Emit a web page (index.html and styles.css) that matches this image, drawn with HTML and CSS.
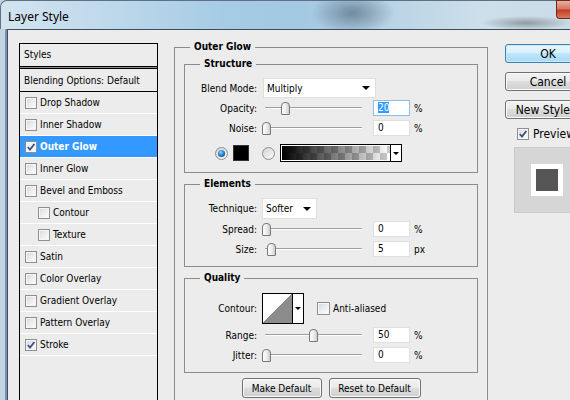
FILE: index.html
```html
<!DOCTYPE html>
<html>
<head>
<meta charset="utf-8">
<title>Layer Style</title>
<link rel="stylesheet" href="styles.css">
</head>
<body>
<div class="window">
  <div class="titlebar">
    <span class="title">Layer Style</span>
    <span class="close"></span>
  </div>
  <div class="main">
    <div class="frame-left"></div>
    <div class="content">
      <div class="styles-list">
        <div class="list-head">Styles</div>
        <div class="list-row blend">Blending Options: Default</div>
        <div class="list-row"><span class="cb"></span>Drop Shadow</div>
        <div class="list-row"><span class="cb"></span>Inner Shadow</div>
        <div class="list-row selected"><span class="cb"><svg viewBox="0 0 10 10" width="10" height="10"><path d="M1.8 5 L4 7.6 L8.4 2" fill="none" stroke="#3d4f86" stroke-width="1.8"/></svg></span>Outer Glow</div>
        <div class="list-row"><span class="cb"></span>Inner Glow</div>
        <div class="list-row"><span class="cb"></span>Bevel and Emboss</div>
        <div class="list-row indent"><span class="cb"></span>Contour</div>
        <div class="list-row indent"><span class="cb"></span>Texture</div>
        <div class="list-row"><span class="cb"></span>Satin</div>
        <div class="list-row"><span class="cb"></span>Color Overlay</div>
        <div class="list-row"><span class="cb"></span>Gradient Overlay</div>
        <div class="list-row"><span class="cb"></span>Pattern Overlay</div>
        <div class="list-row"><span class="cb"><svg viewBox="0 0 10 10" width="10" height="10"><path d="M1.8 5 L4 7.6 L8.4 2" fill="none" stroke="#3d4f86" stroke-width="1.8"/></svg></span>Stroke</div>
      </div>

      <fieldset class="group outer">
        <legend>Outer Glow</legend>

        <fieldset class="group sub structure">
          <legend>Structure</legend>
          <div class="row">
            <span class="lbl">Blend Mode:</span>
            <span class="select wide">Multiply<span class="arrow"></span></span>
          </div>
          <div class="row">
            <span class="lbl">Opacity:</span>
            <span class="slider"><span class="thumb" style="--v:0.2"></span></span>
            <span class="input focus"><span class="sel">20</span></span>
            <span class="unit">%</span>
          </div>
          <div class="row">
            <span class="lbl">Noise:</span>
            <span class="slider"><span class="thumb" style="--v:0"></span></span>
            <span class="input">0</span>
            <span class="unit">%</span>
          </div>
          <div class="row color-row">
            <svg class="radio" viewBox="0 0 13 13" width="13" height="13">
              <defs>
                <linearGradient id="rg" x1="0" y1="0" x2="1" y2="1"><stop offset="0" stop-color="#d0d3d7"/><stop offset="1" stop-color="#fbfbfb"/></linearGradient>
                <radialGradient id="rb" cx="0.4" cy="0.35" r="0.7"><stop offset="0" stop-color="#8fd3fb"/><stop offset="0.6" stop-color="#2b7fc7"/><stop offset="1" stop-color="#1a4f8c"/></radialGradient>
              </defs>
              <circle cx="6.5" cy="6.5" r="6" fill="url(#rg)" stroke="#8a8d90"/>
              <circle cx="6.5" cy="6.5" r="3.6" fill="url(#rb)"/>
            </svg>
            <span class="swatch"></span>
            <svg class="radio r2" viewBox="0 0 13 13" width="13" height="13">
              <defs>
                <linearGradient id="rg2" x1="0" y1="0" x2="1" y2="1"><stop offset="0" stop-color="#d0d3d7"/><stop offset="1" stop-color="#fbfbfb"/></linearGradient>
              </defs>
              <circle cx="6.5" cy="6.5" r="6" fill="url(#rg2)" stroke="#8a8d90"/>
            </svg>
            <span class="gpick"><span class="gprev"></span><span class="gdrop"><span class="tri"></span></span></span>
          </div>
        </fieldset>

        <fieldset class="group sub elements">
          <legend>Elements</legend>
          <div class="row tall">
            <span class="lbl">Technique:</span>
            <span class="select short">Softer<span class="arrow"></span></span>
          </div>
          <div class="row">
            <span class="lbl">Spread:</span>
            <span class="slider"><span class="thumb" style="--v:0"></span></span>
            <span class="input">0</span>
            <span class="unit">%</span>
          </div>
          <div class="row">
            <span class="lbl">Size:</span>
            <span class="slider"><span class="thumb" style="--v:0.05"></span></span>
            <span class="input">5</span>
            <span class="unit">px</span>
          </div>
        </fieldset>

        <fieldset class="group sub quality">
          <legend>Quality</legend>
          <div class="row contour-row">
            <span class="lbl">Contour:</span>
            <span class="contour"><span class="cprev"></span><span class="cdrop"><span class="tri"></span></span></span>
            <span class="cb aa"></span>
            <span class="aa-text">Anti-aliased</span>
          </div>
          <div class="row">
            <span class="lbl">Range:</span>
            <span class="slider"><span class="thumb" style="--v:0.5"></span></span>
            <span class="input">50</span>
            <span class="unit">%</span>
          </div>
          <div class="row">
            <span class="lbl">Jitter:</span>
            <span class="slider"><span class="thumb" style="--v:0"></span></span>
            <span class="input">0</span>
            <span class="unit">%</span>
          </div>
        </fieldset>

        <div class="btnrow">
          <button class="btn make">Make Default</button>
          <button class="btn reset">Reset to Default</button>
        </div>
      </fieldset>

      <div class="side">
        <button class="btn pbtn ok">OK</button>
        <button class="btn pbtn">Cancel</button>
        <button class="btn pbtn">New Style...</button>
        <div class="preview-row">
          <span class="cb"><svg viewBox="0 0 10 10" width="10" height="10"><path d="M1.8 5 L4 7.6 L8.4 2" fill="none" stroke="#3d4f86" stroke-width="1.8"/></svg></span>
          <span class="pv-text">Preview</span>
        </div>
        <div class="preview-box">
          <div class="pv-white"><div class="pv-dark"></div></div>
        </div>
      </div>
    </div>
  </div>
</div>
</body>
</html>
```
FILE: styles.css
```css
* { box-sizing: border-box; }
html, body { margin: 0; padding: 0; }
body {
  width: 570px;
  height: 400px;
  overflow: hidden;
  background: #c2d5e5;
  font-family: "DejaVu Sans Condensed", "DejaVu Sans", sans-serif;
  font-size: 10px;
  color: #000;
}
.window {
  width: 570px;
  height: 400px;
  display: flex;
  flex-direction: column;
}

/* title bar */
.titlebar {
  height: 29px;
  flex: none;
  display: flex;
  align-items: center;
  padding-left: 7px;
  border-top: 1px solid #5e7183;
  border-left: 1px solid #5e7183;
  border-top-left-radius: 7px;
  background:
    radial-gradient(ellipse 42px 22px at 352px 12px, rgba(60,80,100,0.55), rgba(60,80,100,0) 100%),
    radial-gradient(ellipse 45px 7px at 525px 22px, rgba(70,75,80,0.45), rgba(70,75,80,0) 100%),
    linear-gradient(to right, #d3e4f0 0%, #bfd9eb 18%, #a5cbe5 40%, #a2c8e2 52%, #b9d4e6 68%, #cddfea 85%, #c9dbe6 100%);
}
.title {
  font-family: "Noto Sans", "Open Sans", sans-serif;
  font-size: 12px;
  color: #000;
  margin-top: 2px;
}
.close {
  margin-left: auto;
  align-self: flex-start;
  width: 14px;
  height: 19px;
  margin-top: -1px;
  border: 1px solid #6b2a1f;
  border-right: none;
  border-radius: 0 0 0 4px;
  background: linear-gradient(#eab0a2 0%, #d8735c 48%, #c2391f 52%, #d97a5e 100%);
}

/* main area */
.main {
  flex: 1;
  display: flex;
  min-height: 0;
}
.frame-left {
  width: 7px;
  flex: none;
  background: linear-gradient(to right, #c2d5e5 0, #c2d5e5 5px, #7a93ad 5px);
}
.content {
  flex: 1;
  min-width: 0;
  background: #ececec;
  border-left: 1px solid #3e4d5c;
  border-top: 1px solid #3e4d5c;
  display: flex;
  align-items: flex-start;
  padding: 13px 0 0 11px;
  overflow: hidden;
}

/* styles list */
.styles-list {
  width: 139px;
  flex: none;
  height: 400px;
  border: 1px solid #000;
  border-bottom: none;
}
.list-head {
  height: 25px;
  line-height: 22px;
  padding-left: 4px;
  background: linear-gradient(to bottom, transparent 22px, #000 22px, #000 23px, #8f8f8f 23px, #8f8f8f 24px, #000 24px);
}
.list-row {
  height: 22px;
  display: flex;
  align-items: center;
  padding-left: 5px;
  border-bottom: 1px solid #fff;
  white-space: nowrap;
}
.list-row.blend {
  height: 23px;
  padding-left: 4px;
  border-bottom-color: #000;
}
.list-row.indent { padding-left: 18px; }
.list-row.selected {
  background: #3399ff;
  color: #fff;
  font-weight: bold;
}
.cb {
  width: 12px;
  height: 12px;
  flex: none;
  border: 1px solid #8e8f8f;
  background: linear-gradient(135deg, #d3d6da 0%, #eeeff0 55%, #fdfdfd 100%);
  box-shadow: inset 0 0 0 1px #f6f6f6;
  margin-right: 3px;
  display: flex;
  align-items: center;
  justify-content: center;
}
.selected .cb { background: #f4f4f4; }

/* fieldsets */
.group {
  margin: 0;
  min-width: 0;
  border: 1px solid #8c8c8c;
}
.group > legend {
  font-weight: bold;
  line-height: 14px;
  padding: 0 4px;
}
.group.outer {
  width: 314px;
  flex: none;
  margin: -3px 0 0 16px;
  padding: 3px 9px 30px 9px;
}
.group.outer > legend { margin-left: 6px; }
.group.sub {
  padding: 7px 0 7px 0;
}
.group.sub > legend { margin-left: 15px; }
.group.sub + .group.sub { margin-top: 4px; }
.group.structure { padding-bottom: 9px; }
.group.quality { padding-top: 8px; }

.row {
  display: flex;
  align-items: center;
  height: 20px;
}
.row.tall { height: 21px; }
.lbl {
  width: 72px;
  flex: none;
  text-align: right;
  white-space: nowrap;
}
.select {
  height: 20px;
  margin-left: 5px;
  background: #fff;
  border: 1px solid #dedede;
  display: flex;
  align-items: center;
  padding-left: 3px;
}
.select.wide { width: 113px; margin-left: 6px; }
.select.short { width: 55px; height: 21px; }
.arrow {
  width: 0;
  height: 0;
  border-left: 4px solid transparent;
  border-right: 4px solid transparent;
  border-top: 4px solid #000;
  margin-left: auto;
  margin-right: 5px;
}
.slider {
  width: 103px;
  height: 20px;
  flex: none;
  margin-left: 5px;
  display: flex;
  align-items: center;
  background:
    linear-gradient(#9f9f9f, #9f9f9f) no-repeat 3px 9px / 97px 1px,
    linear-gradient(#ffffff, #ffffff) no-repeat 3px 10px / 97px 1px;
}
.thumb {
  width: 9px;
  height: 13px;
  flex: none;
  border: 1px solid #787878;
  border-radius: 4px 4px 1px 1px;
  background: linear-gradient(to right, #fdfdfd 0%, #ececec 55%, #cdcdcd 100%);
  margin-left: calc(var(--v) * 94px);
}
.input {
  width: 37px;
  height: 16px;
  flex: none;
  margin-left: 8px;
  background: #fff;
  border: 1px solid #e0e0e0;
  padding-left: 4px;
  line-height: 14px;
}
.input.focus { border-color: #8fbbe6; }
.sel {
  background: #3399ff;
  color: #fff;
}
.unit { margin-left: 4px; }

.color-row {
  margin-top: 5px;
  padding-left: 30px;
}
.radio { flex: none; display: block; }
.swatch {
  width: 16px;
  height: 16px;
  flex: none;
  margin-left: 5px;
  background: #000;
  border: 1px solid #333;
}
.radio.r2 { margin-left: 13px; }
.gpick {
  width: 122px;
  height: 18px;
  flex: none;
  margin-left: 5px;
  border: 1px solid #000;
  background: #fff;
  padding: 1px 0 1px 1px;
  display: flex;
}
.gprev {
  flex: 1;
  background:
    linear-gradient(to right, #000 0%, rgba(0,0,0,0) 100%),
    repeating-conic-gradient(#cccccc 0 25%, #ffffff 0 50%) 0 0 / 14px 14px;
}
.gdrop {
  width: 11px;
  flex: none;
  margin: -1px 0;
  border-left: 1px solid #000;
  background: #fff;
  display: flex;
  align-items: center;
  justify-content: center;
}
.tri {
  width: 0;
  height: 0;
  border-left: 3px solid transparent;
  border-right: 3px solid transparent;
  border-top: 3px solid #000;
}

.contour-row {
  height: 31px;
  margin-bottom: 1px;
}
.contour {
  width: 42px;
  height: 31px;
  flex: none;
  margin-left: 5px;
  border: 1px solid #000;
  display: flex;
  background: #fff;
}
.cprev {
  flex: 1;
  background: linear-gradient(to bottom right, #ffffff 50%, #8c8c8c 50%);
}
.cdrop {
  width: 11px;
  flex: none;
  border-left: 1px solid #000;
  display: flex;
  align-items: center;
  justify-content: center;
}
.cb.aa {
  width: 13px;
  height: 13px;
  margin-left: 13px;
  margin-right: 3px;
}
.aa-text { white-space: nowrap; }

/* buttons */
.btn {
  font-family: "DejaVu Sans Condensed", "DejaVu Sans", sans-serif;
  font-size: 10px;
  color: #000;
  height: 20px;
  padding: 0;
  border: 1px solid #707070;
  border-radius: 3px;
  background: linear-gradient(#f2f2f2 0%, #ebebeb 45%, #dddddd 50%, #cfcfcf 100%);
  box-shadow: inset 0 0 0 1px #fbfbfb;
  white-space: nowrap;
  overflow: hidden;
}
.btnrow {
  display: flex;
  justify-content: center;
  gap: 7px;
  margin-top: 5px;
}
.btn.make { width: 80px; }
.btn.reset { width: 92px; }

.side {
  width: 86px;
  flex: none;
  margin: 1px 0 0 17px;
  display: flex;
  flex-direction: column;
}
.pbtn {
  height: 19px;
  font-size: 12px;
  margin-bottom: 9px;
}
.pbtn.ok {
  border-color: #3c7fb1;
  background: linear-gradient(#eaf6fd 0%, #d9f0fc 45%, #bee6fd 50%, #a7d9f5 100%);
  box-shadow: inset 0 0 0 1px #c9ebfd;
}
.preview-row {
  display: flex;
  align-items: center;
  height: 13px;
  margin: -1px 0 0 12px;
}
.preview-row .cb { margin-right: 4px; }
.pv-text { font-size: 12px; white-space: nowrap; }
.preview-box {
  width: 66px;
  height: 66px;
  margin: 7px 0 0 9px;
  background: #d6d6d6;
  border: 1px solid #cbcbcb;
  display: flex;
  align-items: center;
  justify-content: center;
}
.pv-white {
  width: 32px;
  height: 32px;
  background: #fff;
  display: flex;
  align-items: center;
  justify-content: center;
}
.pv-dark {
  width: 22px;
  height: 22px;
  background: #565656;
}
```
